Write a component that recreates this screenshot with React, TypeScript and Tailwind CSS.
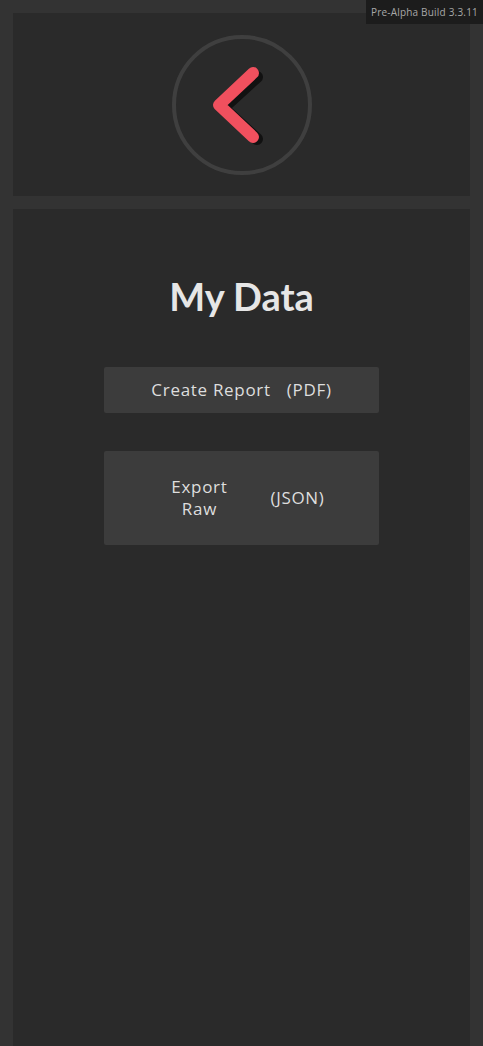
import React from 'react'

const font = { fontFamily: '"Open Sans", "Noto Sans", sans-serif' }

function BackButton() {
  return (
    <button className="flex h-[140px] w-[140px] items-center justify-center rounded-full border-4 border-[#3f3f3f]">
      <svg width="140" height="140" viewBox="0 0 140 140" className="-m-1">
        <polyline
          points="83,40 49,71 83,102"
          fill="none"
          stroke="#111"
          strokeWidth="12"
          strokeLinecap="round"
          strokeLinejoin="round"
          transform="translate(2,2)"
        />
        <polyline
          points="81,38 47,70 81,102"
          fill="none"
          stroke="#f0505e"
          strokeWidth="12"
          strokeLinecap="round"
          strokeLinejoin="round"
        />
      </svg>
    </button>
  )
}

export default function App() {
  return (
    <div className="relative flex min-h-[1046px] flex-col gap-[13px] bg-[#333333] px-[13px] pt-[13px]" style={font}>
      <div className="absolute right-0 top-0 bg-[#1c1c1c] px-[5px] py-[5px] text-[10px] leading-[14px] tracking-[0.2px] text-[#a8a8a8]">
        Pre-Alpha Build 3.3.11
      </div>

      <div className="flex h-[183px] items-center justify-center bg-[#2a2a2a]">
        <BackButton />
      </div>

      <div className="flex flex-1 flex-col items-center bg-[#2a2a2a] pt-[62px]">
        <h1
          className="text-[38px] font-bold leading-[50px] text-[#e6e6e6]"
          style={{ fontFamily: 'Lato, "Open Sans", sans-serif' }}
        >
          My Data
        </h1>

        <button className="mt-[46px] flex h-[46px] w-[275px] items-center justify-center gap-[16px] rounded-[2px] bg-[#3c3c3c] text-[17px] tracking-[0.7px] text-[#dedede]">
          <span>Create Report</span>
          <span>(PDF)</span>
        </button>

        <button className="mt-[38px] flex h-[94px] w-[275px] items-center justify-center gap-[36px] rounded-[2px] bg-[#3c3c3c] pl-[6px] text-[17px] leading-[22px] tracking-[0.7px] text-[#dedede]">
          <span className="w-[70px] text-center">Export Raw</span>
          <span>(JSON)</span>
        </button>
      </div>
    </div>
  )
}
